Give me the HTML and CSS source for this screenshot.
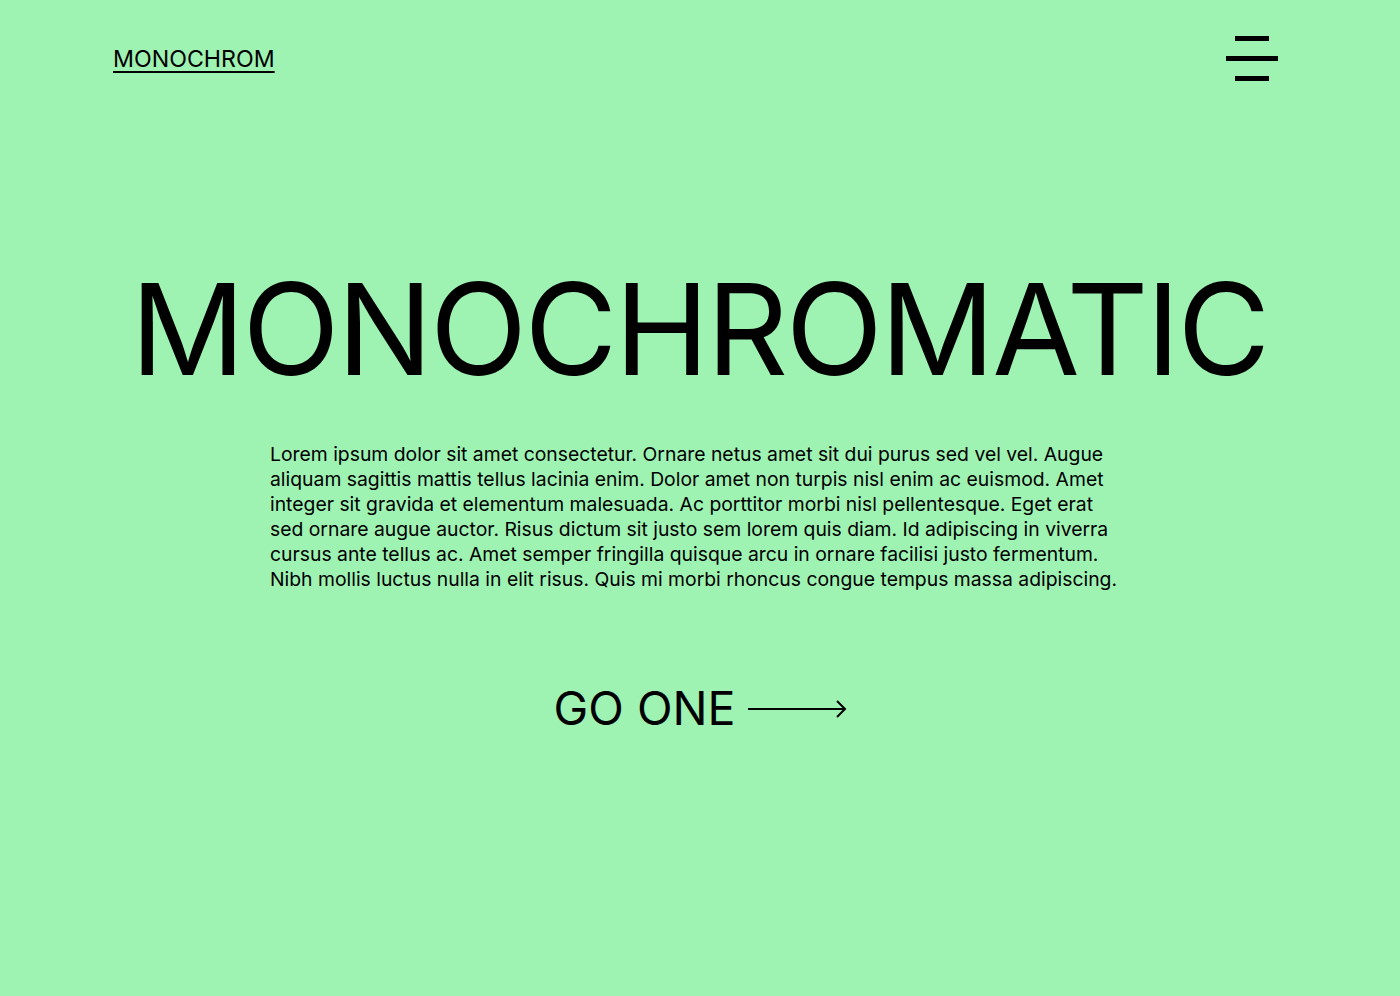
FILE: index.html
```html
<!DOCTYPE html>
<html lang="en">
<head>
<meta charset="utf-8">
<title>Monochrom</title>
<link rel="stylesheet" href="styles.css">
</head>
<body>
<div class="page">
  <header class="header">
    <a class="logo" href="#">MONOCHROM</a>
    <button class="menu" aria-label="Menu">
      <span class="bar bar-short"></span>
      <span class="bar bar-long"></span>
      <span class="bar bar-short"></span>
    </button>
  </header>
  <main class="hero">
    <h1 class="title">MONOCHROMATIC</h1>
    <p class="text">Lorem ipsum dolor sit amet consectetur. Ornare netus amet sit dui purus sed vel vel. Augue aliquam sagittis mattis tellus lacinia enim. Dolor amet non turpis nisl enim ac euismod. Amet integer sit gravida et elementum malesuada. Ac porttitor morbi nisl pellentesque. Eget erat sed ornare augue auctor. Risus dictum sit justo sem lorem quis diam. Id adipiscing in viverra cursus ante tellus ac. Amet semper fringilla quisque arcu in ornare facilisi justo fermentum. Nibh mollis luctus nulla in elit risus. Quis mi morbi rhoncus congue tempus massa adipiscing.</p>
    <a class="cta" href="#">
      <span class="cta-label">GO ONE</span>
      <svg class="cta-arrow" width="100" height="20" viewBox="0 0 100 20" fill="none" stroke="#000" stroke-width="2">
        <path d="M0 10H97"/>
        <path d="M89 2L97 10L89 18"/>
      </svg>
    </a>
  </main>
</div>
</body>
</html>
```
FILE: styles.css
```css
* { box-sizing: border-box; }
html, body {
  margin: 0;
  padding: 0;
  background: #9ef3b3;
  color: #000;
  font-family: Inter, "Noto Sans", sans-serif;
}
.page {
  width: 1400px;
  height: 996px;
  padding: 0 122px 0 113px;
}
.header {
  display: flex;
  justify-content: space-between;
  align-items: flex-start;
  padding-top: 36px;
}
.logo {
  margin-top: 10px;
  font-size: 23.2px;
  line-height: 26px;
  color: #000;
  text-decoration: underline;
  text-decoration-thickness: 1.5px;
  text-underline-offset: 4px;
}
.menu {
  display: flex;
  flex-direction: column;
  align-items: center;
  gap: 15px;
  width: 52px;
  padding: 0;
  border: 0;
  background: none;
}
.bar {
  display: block;
  height: 5px;
  background: #000;
}
.bar-short { width: 34px; }
.bar-long { width: 52px; }
.hero {
  display: flex;
  flex-direction: column;
  align-items: center;
  margin-left: -113px;
  margin-right: -122px;
}
.title {
  margin: 171px 0 0;
  font-size: 127px;
  font-weight: 400;
  line-height: 154px;
  letter-spacing: -2.6px;
  transform: translateX(-1px);
}
.text {
  margin: 36px 0 0;
  width: 850px;
  font-size: 19.35px;
  line-height: 25px;
  transform: translateX(-5px);
}
.cta {
  display: flex;
  align-items: center;
  gap: 13px;
  margin-top: 89px;
  color: #000;
  text-decoration: none;
  transform: translateX(1px);
}
.cta-label {
  font-size: 46.5px;
  line-height: 54px;
}
.cta-arrow { display: block; margin-top: 2px; }
```
